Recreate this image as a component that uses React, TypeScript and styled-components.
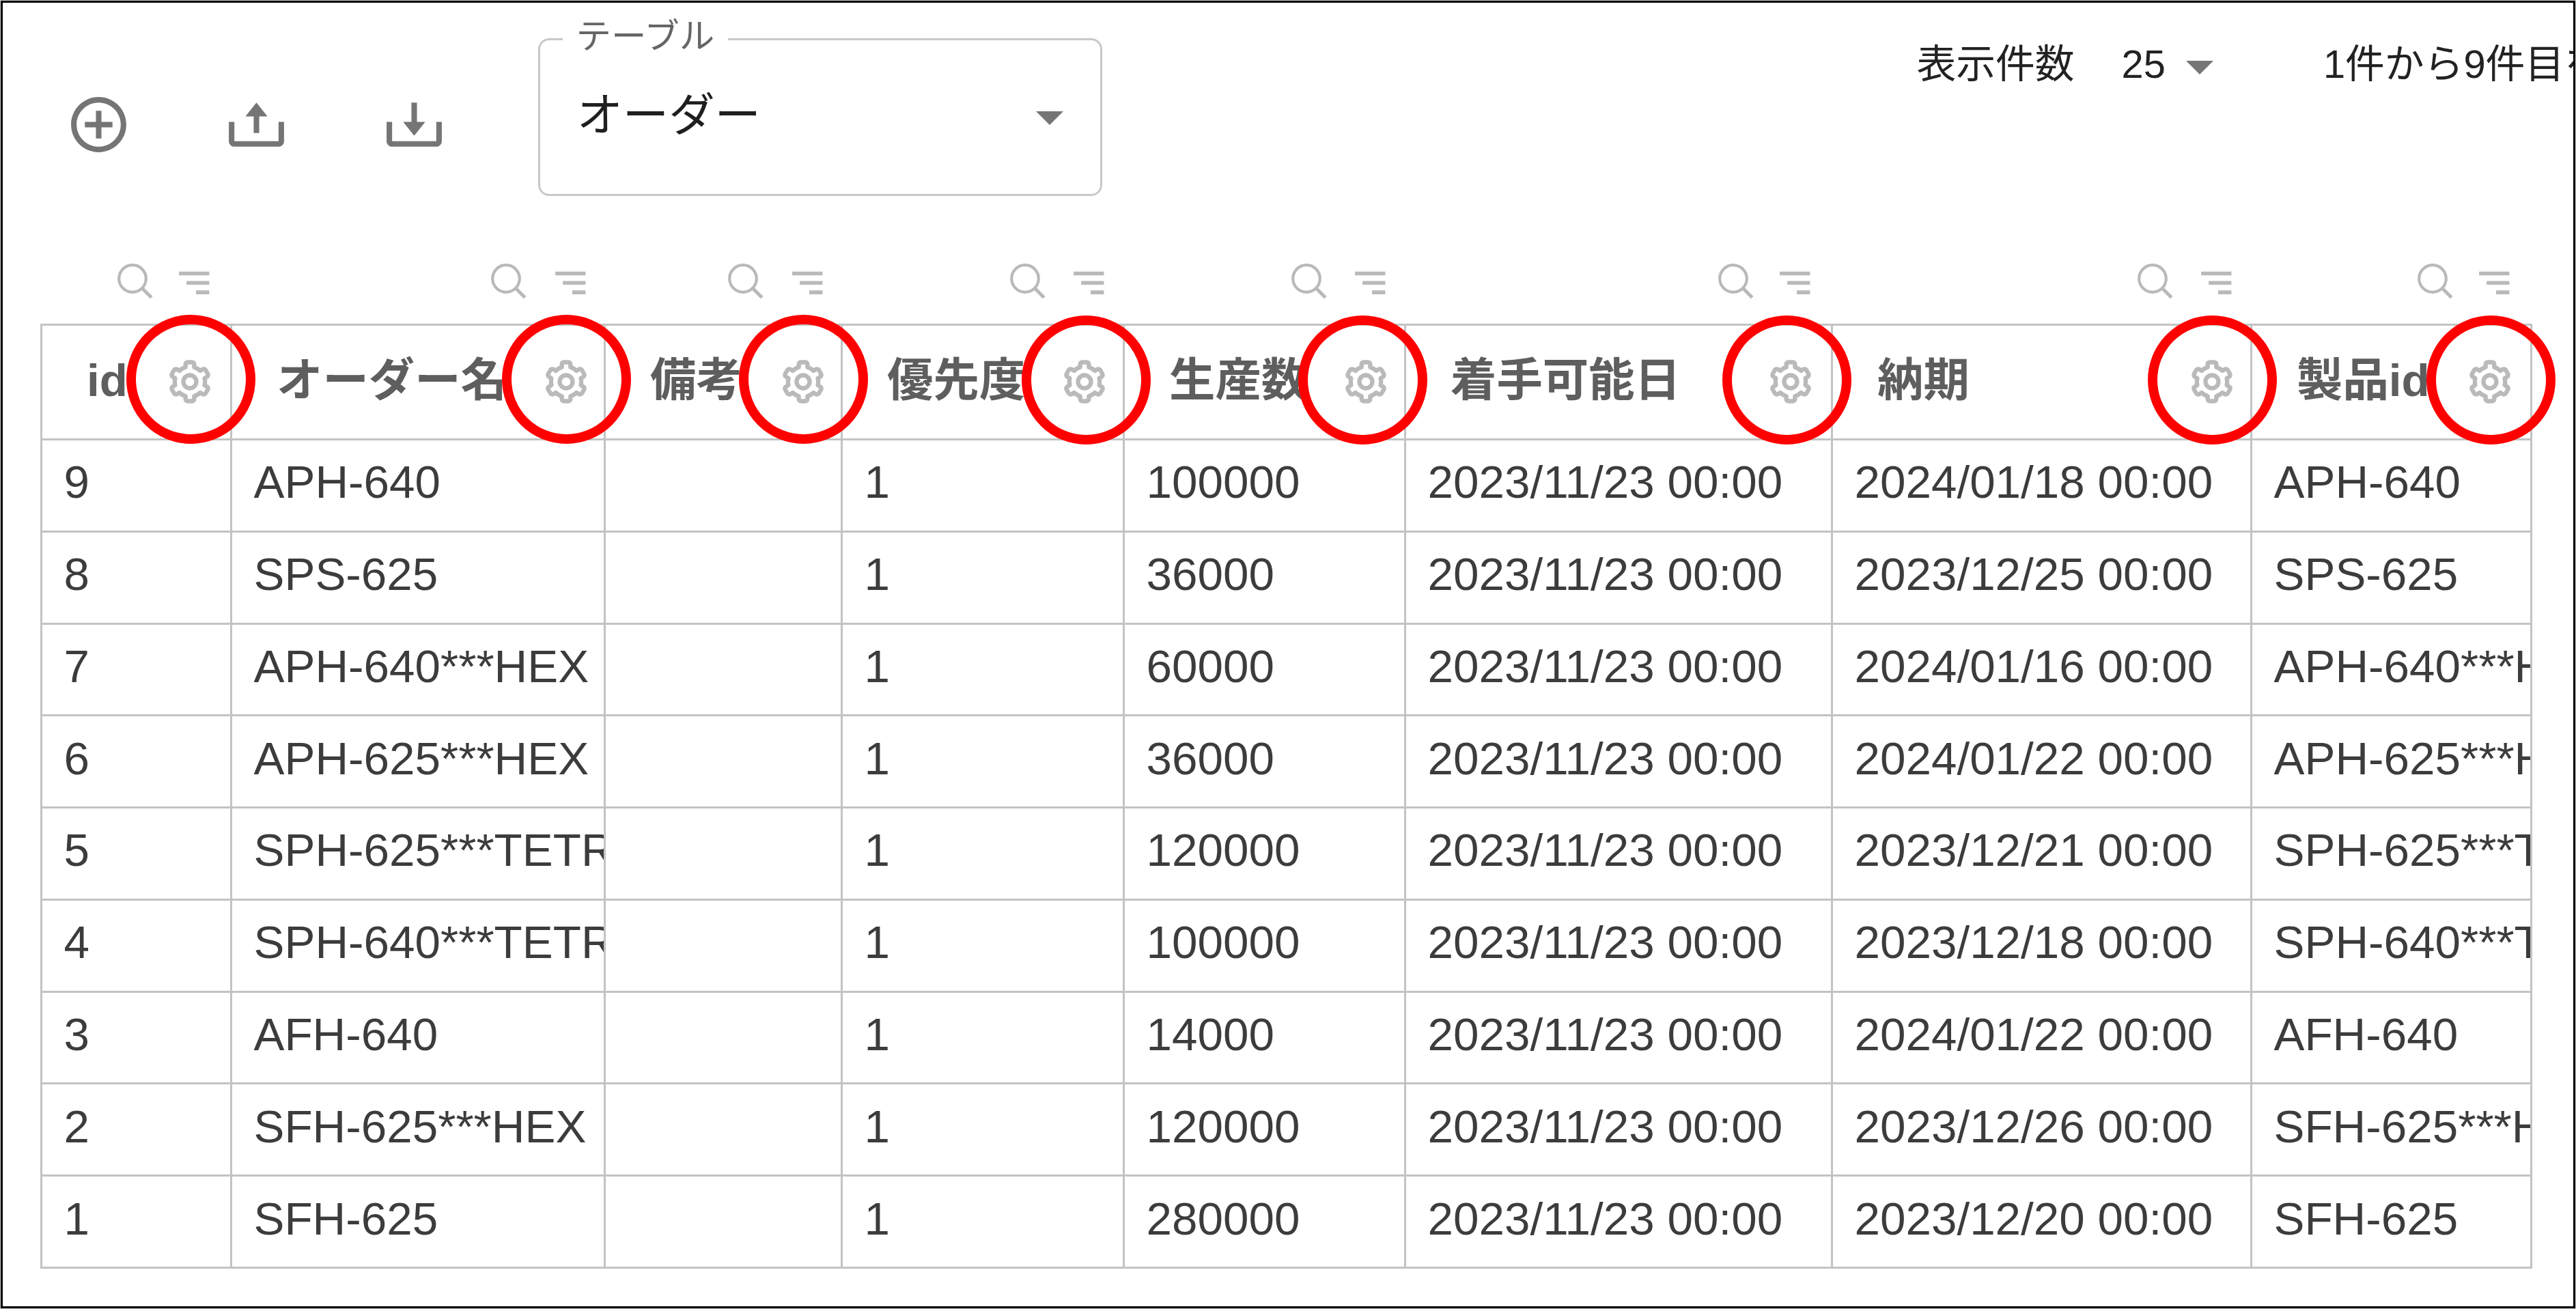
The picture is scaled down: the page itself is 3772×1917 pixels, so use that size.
import React from "react";
import styled, { createGlobalStyle } from "styled-components";
import { BiCog, BiDownload, BiMenuAltRight, BiPlusCircle, BiUpload } from "react-icons/bi";

const LINE = "#c3c3c3";
const FONT = `"Liberation Sans", "Noto Sans CJK JP", sans-serif`;

const GlobalStyle = createGlobalStyle`
  *, *::before, *::after { box-sizing: border-box; }
  body { margin: 0; background: #fff; font-family: ${FONT}; }
`;

const Page = styled.div`
  width: 3772px;
  height: 1917px;
  padding: 1px;
  background: #cdd1ce;
`;

const Frame = styled.main`
  display: flex;
  flex-direction: column;
  height: 1915px;
  border: 3px solid #000;
  background: #fff;
  overflow: hidden;
`;

const Toolbar = styled.header`
  display: flex;
  align-items: flex-start;
  flex: none;
  height: 376px;
  padding: 52px 0 0 92px;
`;

const Actions = styled.div`
  display: flex;
  flex: none;
  gap: 134.2px;
  margin-top: 78px;
`;

const IconButton = styled.button`
  display: flex;
  padding: 0;
  border: 0;
  background: none;
  color: #757575;
  svg { width: 97px; height: 97px; }
`;

const Select = styled.div`
  position: relative;
  display: flex;
  justify-content: space-between;
  align-items: flex-start;
  flex: none;
  width: 826px;
  height: 231px;
  margin-left: 133px;
  padding: 0 54px 0 53px;
  border: 3px solid #c8c8c8;
  border-radius: 16px;
`;

const SelectLabel = styled.span`
  position: absolute;
  left: 33px;
  top: -35px;
  width: 242px;
  padding-left: 19px;
  background: #fff;
  color: #666;
  font-size: 51.5px;
  line-height: 58px;
  white-space: nowrap;
`;

const SelectValue = styled.span`
  margin-top: 70px;
  color: #1f1f1f;
  font-size: 67.4px;
  line-height: 80px;
`;

const Caret = styled.span<{ $top: number }>`
  width: 0;
  height: 0;
  margin-top: ${(p) => p.$top}px;
  border: 20.5px solid transparent;
  border-top-color: #757575;
  border-bottom: 0;
`;

const Pager = styled.div`
  display: flex;
  align-items: flex-start;
  flex: none;
  margin: 3px 0 0 1192px;
  color: #222;
  font-size: 57.8px;
  line-height: 70px;
  white-space: nowrap;
`;

const PagerSize = styled.span`
  display: flex;
  gap: 30px;
  margin: 0 161px 0 69px;
`;

const Grid = styled.section`
  width: 3650px;
  margin-left: 55px;
`;

const Cells = styled.div`
  display: grid;
  grid-template-columns: 278px 547px 347px 413px 412px 625px 614px 410px;
`;

const FilterRow = styled(Cells)`
  height: 94px;
  padding-left: 3px;
`;

const FilterTools = styled.div<{ $inset: number }>`
  display: flex;
  justify-content: space-between;
  align-items: flex-start;
  justify-self: end;
  width: 167.7px;
  padding-right: ${(p) => p.$inset - 9.5}px;
  color: #b9b9b9;
`;

const SearchIcon = styled.svg`
  width: 52px;
  height: 52px;
  margin-top: 6px;
  fill: none;
  stroke: currentColor;
`;

const SortIcon = styled(BiMenuAltRight)`
  width: 66.5px;
  height: 66.5px;
  margin-top: 1px;
`;

const Table = styled.div`
  width: 3649px;
  border-top: 3px solid ${LINE};
  border-left: 3px solid ${LINE};
`;

const HeadRow = styled(Cells)`
  position: relative;
  z-index: 1;
  height: 168px;
`;

const HeadCell = styled.div<{ $inset: number }>`
  display: flex;
  justify-content: space-between;
  align-items: center;
  border-right: 3px solid ${LINE};
  border-bottom: 3px solid ${LINE};
  padding: 0 ${(p) => p.$inset - 11.2}px 5px 65px;
  color: #5e5e5e;
  font-size: 67.4px;
  font-weight: 700;
  line-height: 80px;
  white-space: nowrap;
`;

const HeadText = styled.span`
  width: 0;
`;

const GearButton = styled.span`
  position: relative;
  display: flex;
  margin-top: 3px;
  color: #bababa;
  svg { width: 76px; height: 76px; }
`;

const Ring = styled.span<{ $dx: number; $dy: number }>`
  position: absolute;
  left: ${(p) => p.$dx - 56.5}px;
  top: ${(p) => p.$dy - 59.5}px;
  width: 189px;
  height: 189px;
  border: 14px solid #f00;
  border-radius: 50%;
`;

const BodyRow = styled(Cells)`
  height: 134.78px;
`;

const BodyCell = styled.div`
  display: flex;
  align-items: center;
  overflow: hidden;
  border-right: 3px solid ${LINE};
  border-bottom: 3px solid ${LINE};
  padding: 0 0 9px 31.5px;
  color: #3c3c3c;
  font-size: 67.4px;
  line-height: 80px;
  white-space: nowrap;
`;

type Column = { title: string; inset: number; dx: number; dy: number };

const columns: Column[] = [
  { title: "id", inset: 32, dx: 0.8, dy: 0 },
  { title: "オーダー名", inset: 28.5, dx: 0.4, dy: 0 },
  { title: "備考", inset: 28.5, dx: 1, dy: 0 },
  { title: "優先度", inset: 29, dx: 1.8, dy: 1 },
  { title: "生産数", inset: 29, dx: -4.8, dy: 1 },
  { title: "着手可能日", inset: 32, dx: -5.4, dy: 1 },
  { title: "納期", inset: 29, dx: 0, dy: 1 },
  { title: "製品id", inset: 32, dx: 0.8, dy: 1 },
];

const START = "2023/11/23 00:00";

const rows: string[][] = [
  ["9", "APH-640", "", "1", "100000", START, "2024/01/18 00:00", "APH-640"],
  ["8", "SPS-625", "", "1", "36000", START, "2023/12/25 00:00", "SPS-625"],
  ["7", "APH-640***HEX", "", "1", "60000", START, "2024/01/16 00:00", "APH-640***HEX"],
  ["6", "APH-625***HEX", "", "1", "36000", START, "2024/01/22 00:00", "APH-625***HEX"],
  ["5", "SPH-625***TETRA", "", "1", "120000", START, "2023/12/21 00:00", "SPH-625***TETRA"],
  ["4", "SPH-640***TETRA", "", "1", "100000", START, "2023/12/18 00:00", "SPH-640***TETRA"],
  ["3", "AFH-640", "", "1", "14000", START, "2024/01/22 00:00", "AFH-640"],
  ["2", "SFH-625***HEX", "", "1", "120000", START, "2023/12/26 00:00", "SFH-625***HEX"],
  ["1", "SFH-625", "", "1", "280000", START, "2023/12/20 00:00", "SFH-625"],
];

const Search = () => (
  <SearchIcon viewBox="0 0 52 52">
    <circle cx="22" cy="22" r="19.8" strokeWidth="4.2" />
    <path d="M35.5 35.5 49.8 49.8" strokeWidth="5" />
  </SearchIcon>
);

export default function App() {
  return (
    <>
      <GlobalStyle />
      <Page>
        <Frame>
          <Toolbar>
            <Actions>
              <IconButton aria-label="追加"><BiPlusCircle /></IconButton>
              <IconButton aria-label="アップロード"><BiUpload /></IconButton>
              <IconButton aria-label="ダウンロード"><BiDownload /></IconButton>
            </Actions>
            <Select>
              <SelectLabel>テーブル</SelectLabel>
              <SelectValue>オーダー</SelectValue>
              <Caret $top={104} />
            </Select>
            <Pager>
              <span>表示件数</span>
              <PagerSize>
                25
                <Caret $top={30} />
              </PagerSize>
              <span>1件から9件目を</span>
            </Pager>
          </Toolbar>
          <Grid>
            <FilterRow>
              {columns.map((c) => (
                <FilterTools key={c.title} $inset={c.inset}>
                  <Search />
                  <SortIcon />
                </FilterTools>
              ))}
            </FilterRow>
            <Table>
              <HeadRow>
                {columns.map((c) => (
                  <HeadCell key={c.title} $inset={c.inset}>
                    <HeadText>{c.title}</HeadText>
                    <GearButton>
                      <BiCog />
                      <Ring $dx={c.dx} $dy={c.dy} />
                    </GearButton>
                  </HeadCell>
                ))}
              </HeadRow>
              {rows.map((row) => (
                <BodyRow key={row[0]}>
                  {row.map((value, i) => (
                    <BodyCell key={i}>{value}</BodyCell>
                  ))}
                </BodyRow>
              ))}
            </Table>
          </Grid>
        </Frame>
      </Page>
    </>
  );
}
